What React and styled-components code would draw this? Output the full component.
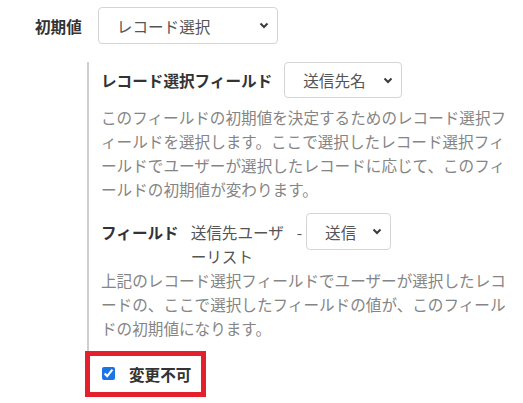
import React from 'react';
import styled, { createGlobalStyle } from 'styled-components';

const GlobalStyle = createGlobalStyle`
    body {
        margin: 0;
        background: #fff;
        font-family: "Noto Sans CJK JP", "Noto Sans", sans-serif;
        font-size: 15.6px;
        color: #333;
    }
`;

const Page = styled.div`
    padding: 7px 0 0 35px;
`;

const Row = styled.div`
    display: flex;
    align-items: baseline;
    gap: ${props => props.gap || 12}px;
    margin-top: ${props => props.top || 0}px;
`;

const Label = styled.span`
    font-weight: 700;
    line-height: 24px;
    white-space: nowrap;
    color: #333;
`;

const Select = styled.div`
    display: inline-flex;
    align-items: center;
    justify-content: space-between;
    box-sizing: border-box;
    width: ${props => props.width}px;
    height: ${props => props.height || 37}px;
    padding: 0 8px 0 18px;
    border: 1px solid #d4d4d4;
    border-radius: 4px;
    background: #fff;
    color: #555;
    flex-shrink: 0;
`;

const Chevron = () => (
    <svg width="10" height="7" viewBox="0 0 10 7">
        <path d="M1.5 1.5 L5 5 L8.5 1.5" fill="none" stroke="#3a3a3a" strokeWidth="2" />
    </svg>
);

const Nested = styled.div`
    margin: 18px 0 0 52px;
    width: 410px;
    padding: 0 0 11px 12px;
    border-left: 2px solid #cfcfcf;
`;

const Help = styled.p`
    margin: ${props => props.top || 0}px 0 0;
    line-height: 24px;
    color: #858585;
`;

const FieldName = styled.span`
    width: 96px;
    line-height: 24px;
    color: #555;
    flex-shrink: 0;
`;

const Dash = styled.span`
    margin: 0 -8px 0 -2px;
    color: #555;
    line-height: 24px;
`;

const Locked = styled.label`
    display: inline-flex;
    align-items: center;
    gap: 14px;
    box-sizing: border-box;
    width: 121px;
    height: 46px;
    margin-left: 50px;
    padding-left: 12px;
    border: 5px solid #e3202b;
    font-weight: 700;
    color: #333;

    & input {
        width: 13px;
        height: 13px;
        margin: 0;
        accent-color: #1a73e8;
    }
`;

export default function App() {
    return (
        <Page>
            <GlobalStyle />
            <Row gap={16}>
                <Label>初期値</Label>
                <Select width={180}>
                    レコード選択
                    <Chevron />
                </Select>
            </Row>
            <Nested>
                <Row top={1}>
                    <Label>レコード選択フィールド</Label>
                    <Select width={118} height={36}>
                        送信先名
                        <Chevron />
                    </Select>
                </Row>
                <Help top={7}>
                    このフィールドの初期値を決定するためのレコード選択フィールドを選択します。ここで選択したレコード選択フィールドでユーザーが選択したレコードに応じて、このフィールドの初期値が変わります。
                </Help>
                <Row top={12}>
                    <Label>フィールド</Label>
                    <FieldName>送信先ユーザーリスト</FieldName>
                    <Dash>-</Dash>
                    <Select width={85}>
                        送信
                        <Chevron />
                    </Select>
                </Row>
                <Help>
                    上記のレコード選択フィールドでユーザーが選択したレコードの、ここで選択したフィールドの値が、このフィールドの初期値になります。
                </Help>
            </Nested>
            <Locked>
                <input type="checkbox" defaultChecked />
                変更不可
            </Locked>
        </Page>
    );
}
